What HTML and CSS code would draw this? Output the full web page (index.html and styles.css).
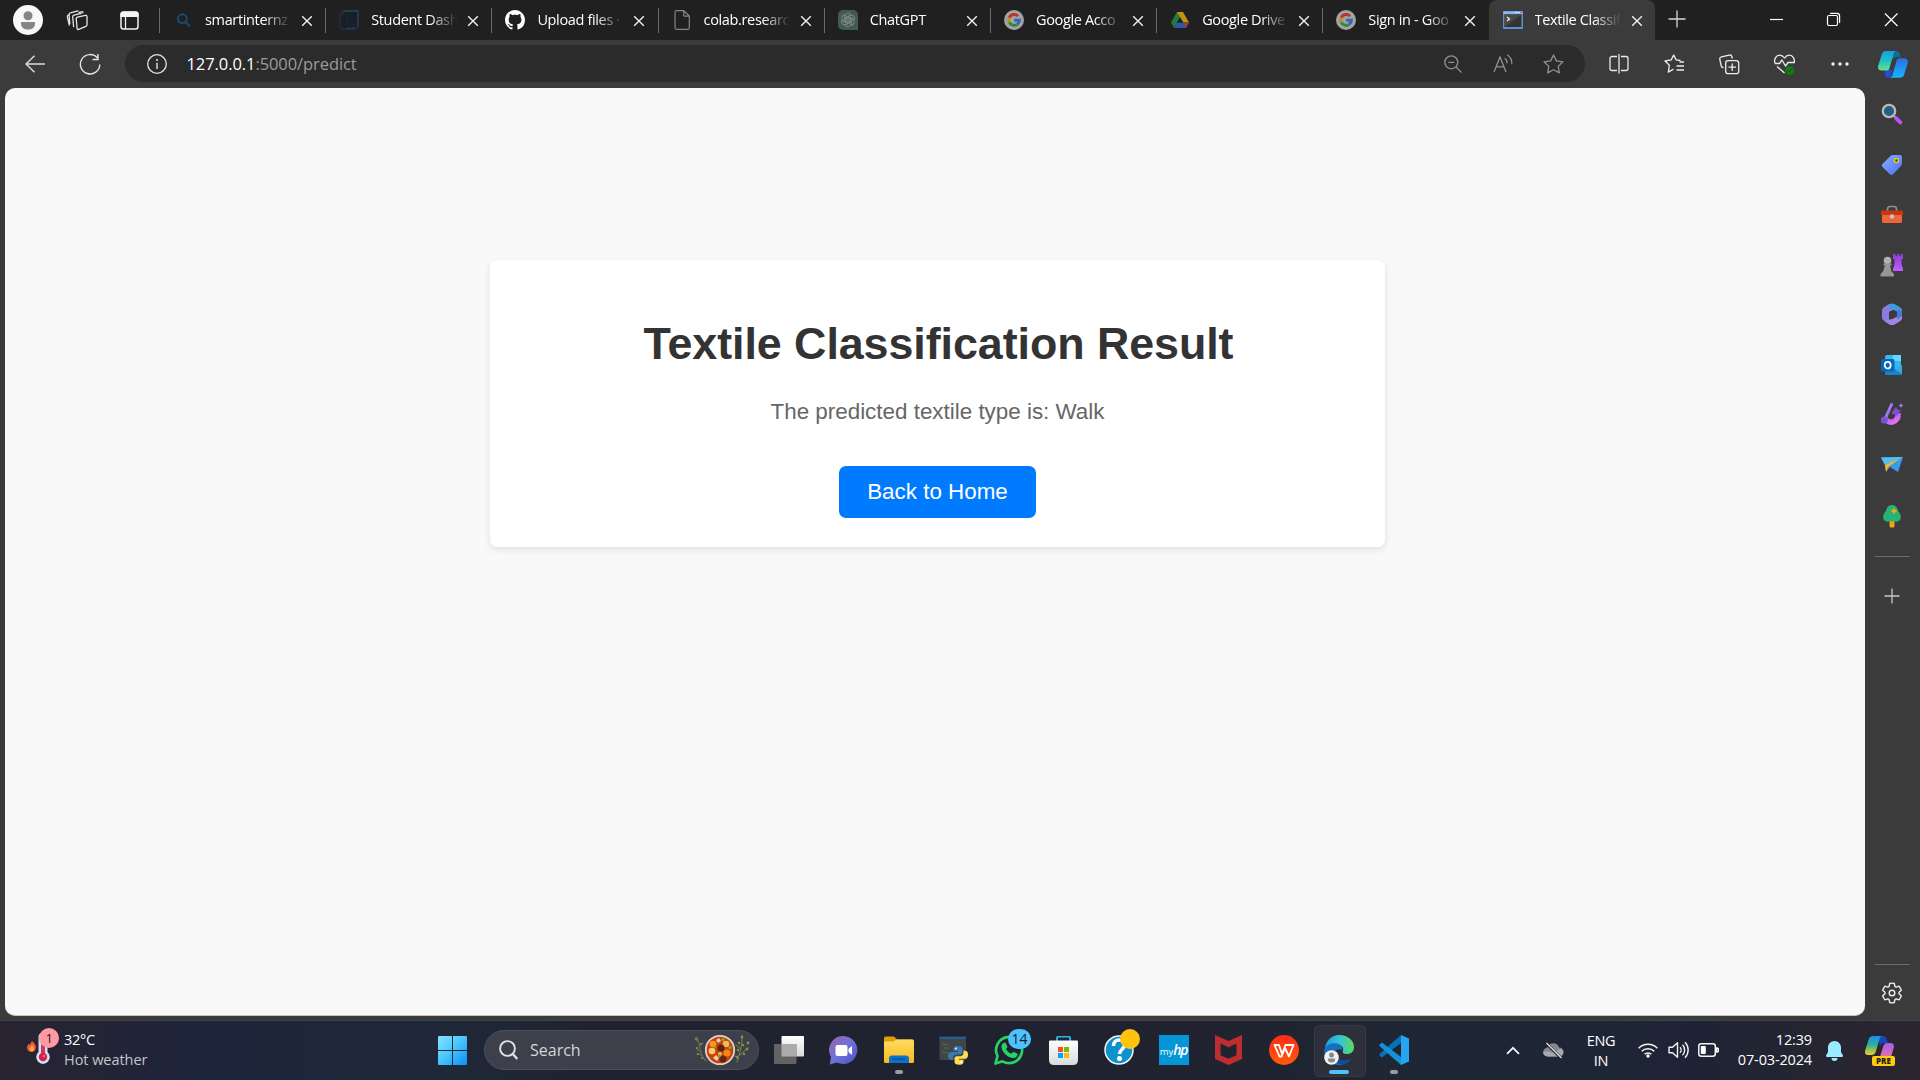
FILE: index.html
```html
<!DOCTYPE html>
<html lang="en">
<head>
<meta charset="utf-8">
<title>Textile Classification Result</title>
<link rel="stylesheet" href="styles.css">
</head>
<body>
<svg class="defs" width="0" height="0" aria-hidden="true">
  <defs>
    <linearGradient id="win" x1="0" y1="0" x2="1" y2="1"><stop offset="0" stop-color="#8be0ff"/><stop offset=".45" stop-color="#4cc9fb"/><stop offset="1" stop-color="#0a8df8"/></linearGradient>
    <linearGradient id="copA" x1="0" y1="0" x2="0" y2="1"><stop offset="0" stop-color="#16a0dc"/><stop offset=".5" stop-color="#1fbfc4"/><stop offset="1" stop-color="#6ee08a"/></linearGradient>
    <linearGradient id="copB" x1="0" y1="0" x2="0" y2="1"><stop offset="0" stop-color="#2d6fe0"/><stop offset="1" stop-color="#16b4ff"/></linearGradient>
    <linearGradient id="copC" x1="0" y1="0" x2="0" y2="1"><stop offset="0" stop-color="#1b8ff0"/><stop offset=".45" stop-color="#2fae9a"/><stop offset="1" stop-color="#f0d020"/></linearGradient>
    <linearGradient id="copD" x1="0" y1="0" x2="0" y2="1"><stop offset="0" stop-color="#a45cf0"/><stop offset="1" stop-color="#ff7a8c"/></linearGradient>
    <linearGradient id="tag" x1="0" y1="0" x2="1" y2="1"><stop offset="0" stop-color="#8ab0ff"/><stop offset="1" stop-color="#4a6ff0"/></linearGradient>
    <linearGradient id="rook" x1="0" y1="0" x2="0" y2="1"><stop offset="0" stop-color="#8a3fd0"/><stop offset="1" stop-color="#c45cff"/></linearGradient>
    <linearGradient id="pink" x1="0" y1="0" x2="1" y2="1"><stop offset="0" stop-color="#8f5cf0"/><stop offset="1" stop-color="#ec70f0"/></linearGradient>
    <linearGradient id="folder" x1="0" y1="0" x2="0" y2="1"><stop offset="0" stop-color="#ffdc62"/><stop offset="1" stop-color="#f9b91c"/></linearGradient>
    <linearGradient id="chat" x1="0" y1="0" x2="1" y2="1"><stop offset="0" stop-color="#9a62a8"/><stop offset=".5" stop-color="#6f73d8"/><stop offset="1" stop-color="#4b50c8"/></linearGradient>
    <linearGradient id="wps" x1="0" y1="0" x2="0" y2="1"><stop offset="0" stop-color="#ff2a1a"/><stop offset="1" stop-color="#ff5a0a"/></linearGradient>
    <linearGradient id="edgeTop" x1="0" y1="0" x2="1" y2="0"><stop offset="0" stop-color="#1b9de0"/><stop offset=".5" stop-color="#34c4d4"/><stop offset="1" stop-color="#5edb58"/></linearGradient>
    <linearGradient id="paper" x1="0" y1="0" x2="0" y2="1"><stop offset="0" stop-color="#ffffff"/><stop offset="1" stop-color="#d8dadd"/></linearGradient>
    <symbol id="x" viewBox="0 0 12 12"><path d="M1.2 1.2l9.6 9.6M10.8 1.2L1.2 10.8" fill="none" stroke="#f0f0f0" stroke-width="1.4"/></symbol>
    <symbol id="google" viewBox="0 0 20 20"><circle cx="10" cy="10" r="10" fill="#a2a2a2"/><g fill="none" stroke-width="2.9"><path d="M5.2 7.6A5.5 5.5 0 0 1 14 6" stroke="#b5362c"/><path d="M5.2 12.4a5.5 5.5 0 0 1 0-4.8" stroke="#bd8e12"/><path d="M13.3 14.3a5.5 5.5 0 0 1-8.1-1.9" stroke="#2e8844"/><path d="M10.2 10.2h5.2a5.4 5.4 0 0 1-2.1 4.1" stroke="#3465b8"/></g></symbol>
  </defs>
</svg>

<header class="tabbar">
  <div class="tool profile"><svg width="30" height="30" viewBox="0 0 30 30"><circle cx="15" cy="15" r="15" fill="#f8f8f8"/><circle cx="15" cy="10.8" r="4.5" fill="#858585"/><path d="M8 17h14v1.5c0 4-3 6-7 6s-7-2-7-6z" fill="#858585"/></svg></div>
  <div class="tool spaces"><svg width="22" height="22" viewBox="0 0 22 22" fill="none" stroke="#e6e6e6" stroke-width="1.3" stroke-linejoin="round" stroke-linecap="round"><path d="M11.5 8.2l7.8-1.9a1.3 1.3 0 0 1 1.7 1.2v8.3c0 .9-.4 1.3-1.2 1.6l-7 3a1.2 1.2 0 0 1-1.7-1l-.9-9.8c0-.8.4-1.2 1.3-1.4z"/><path d="M7.6 17.5l-.9-9.8c0-.8.4-1.4 1.3-1.6l7.2-1.8M3.8 14.5l-.7-9c0-.8.4-1.4 1.3-1.6l7.5-2M3.3 16L1.4 8c-.2-.9 0-1.6.9-2M17 3.6c-.2-.8-.8-1-1.6-.8L13 3.4"/></svg></div>
  <div class="tool tabs-menu"><svg width="19" height="19" viewBox="0 0 19 19"><rect x="1" y="1" width="17" height="17" rx="2.5" fill="none" stroke="#f4f4f4" stroke-width="1.5"/><path d="M.5 3.5a3 3 0 0 1 3-3h12a3 3 0 0 1 3 3V6H.5z" fill="#f4f4f4"/><path d="M5.5 6v12" stroke="#f4f4f4" stroke-width="1.3"/></svg></div>
  <nav class="tabs">
    <div class="tab"><svg class="fav" viewBox="0 0 20 20" fill="none" stroke="#1d4a74" stroke-width="2"><circle cx="9.3" cy="8.7" r="4.4"/><path d="M12.5 12l4.5 4.5"/></svg><span class="label">smartinternz</span><svg class="close"><use href="#x"/></svg></div>
    <div class="tab"><svg class="fav" viewBox="0 0 20 20" fill="none"><path d="M5 1h14v16l-2 2H2l-1-2V5h3z" fill="#1a1e29"/><path d="M4 1h15v15M7 18.500h9" stroke="#1c4f58" stroke-width="1.300"/><path d="M4 1v3H1v12l2 3h13l3-3" stroke="#2b3050" stroke-width="1.200"/><path d="M8 6v8h9" stroke="#1b2942"/></svg><span class="label">Student Dash</span><svg class="close"><use href="#x"/></svg></div>
    <div class="tab"><svg class="fav" viewBox="0 0 16 16"><path fill="#fff" fill-rule="evenodd" d="M8 0C3.58 0 0 3.58 0 8c0 3.54 2.29 6.53 5.47 7.59.4.07.55-.17.55-.38 0-.19-.01-.82-.01-1.49-2.01.37-2.53-.49-2.69-.94-.09-.23-.48-.94-.82-1.13-.28-.15-.68-.52-.01-.53.63-.01 1.08.58 1.23.82.72 1.21 1.87.87 2.33.66.07-.52.28-.87.51-1.07-1.78-.2-3.64-.89-3.64-3.95 0-.87.31-1.59.82-2.15-.08-.2-.36-1.02.08-2.12 0 0 .67-.21 2.2.82.64-.18 1.32-.27 2-.27s1.36.09 2 .27c1.53-1.04 2.2-.82 2.2-.82.44 1.1.16 1.92.08 2.12.51.56.82 1.27.82 2.15 0 3.07-1.87 3.75-3.65 3.95.29.25.54.73.54 1.48 0 1.07-.01 1.93-.01 2.2 0 .21.15.46.55.38A8.01 8.01 0 0 0 16 8c0-4.42-3.58-8-8-8z"/></svg><span class="label">Upload files ·</span><svg class="close"><use href="#x"/></svg></div>
    <div class="tab"><svg class="fav" viewBox="0 0 20 20" fill="none" stroke="#858585" stroke-width="1.2" stroke-linejoin="round"><path d="M4.5.7h7.2L17.3 6v11.8a1.5 1.5 0 0 1-1.5 1.5H4.5A1.5 1.5 0 0 1 3 17.8V2.2A1.5 1.5 0 0 1 4.5.7zM11.7.7v4.500a1 1 0 0 0 1 1h4.600"/></svg><span class="label">colab.researc</span><svg class="close"><use href="#x"/></svg></div>
    <div class="tab"><svg class="fav" viewBox="0 0 20 20"><path d="M5 0h10a5 5 0 0 1 5 5v15H5a5 5 0 0 1-5-5V5a5 5 0 0 1 5-5z" fill="#435953"/><g fill="none" stroke="#7d8885" stroke-width=".9"><g id="petal"><path d="M7.300 11.500V6.200a3.200 3.200 0 0 1 5.700-1.900L8.700 6.900v3.500"/></g><use href="#petal" transform="rotate(60 10 10)"/><use href="#petal" transform="rotate(120 10 10)"/><use href="#petal" transform="rotate(180 10 10)"/><use href="#petal" transform="rotate(240 10 10)"/><use href="#petal" transform="rotate(300 10 10)"/></g></svg><span class="label">ChatGPT</span><svg class="close"><use href="#x"/></svg></div>
    <div class="tab"><svg class="fav"><use href="#google"/></svg><span class="label">Google Acco</span><svg class="close"><use href="#x"/></svg></div>
    <div class="tab"><svg class="fav" viewBox="0 0 20 20"><path d="M7 2h6L4 18l-3-5.500z" fill="#247b3e"/><path d="M7 2h6l6 10.500h-5.800z" fill="#c3920f"/><path d="M4 18l3-5.500h12L16 18z" fill="#2e59a8"/><path d="M14 12.500h5L16 18z" fill="#ae3528"/><path d="M10 7.500l3 5H7z" fill="#202020"/></svg><span class="label">Google Drive</span><svg class="close"><use href="#x"/></svg></div>
    <div class="tab"><svg class="fav"><use href="#google"/></svg><span class="label">Sign in - Goo</span><svg class="close"><use href="#x"/></svg></div>
    <div class="tab active"><svg class="fav" viewBox="0 0 20 20"><rect y="1" width="20" height="18" rx="1" fill="#5c8fd0"/><rect x=".5" y="1.500" width="19" height="2.500" fill="#8fb8ea"/><path d="M12 2.500h2M15 2.500h1.500" stroke="#e4eefb"/><path d="M17 2.500h2" stroke="#e0683c" stroke-width="1.500"/><rect x="1.500" y="4.500" width="17" height="12.500" fill="#333"/><path d="M1.500 17V4.500h17z" fill="#494949"/><path d="M4 7l2.500 2L4 11" fill="none" stroke="#eee" stroke-width="1.300"/></svg><span class="label">Textile Classif</span><svg class="close"><use href="#x"/></svg></div>
  </nav>
  <div class="tool newtab"><svg width="18" height="18" viewBox="0 0 18 18"><path d="M9 .5v17M.5 9h17" stroke="#d8d8d8" stroke-width="1.300"/></svg></div>
  <div class="window-controls">
    <svg width="57" height="38" viewBox="0 0 57 38"><path d="M22 19.500h13" stroke="#fff" stroke-width="1.200"/></svg>
    <svg width="57" height="38" viewBox="0 0 57 38" fill="none" stroke="#fff" stroke-width="1.200"><rect x="22.500" y="15.500" width="10" height="10" rx="1.500"/><path d="M25 13.300h7a2.600 2.600 0 0 1 2.600 2.600v7"/></svg>
    <svg width="57" height="38" viewBox="0 0 57 38"><path d="M23 13.500l12.500 12.500M35.500 13.500L23 26" stroke="#fff" stroke-width="1.200"/></svg>
  </div>
</header>

<div class="toolbar">
  <div class="tool back"><svg width="20" height="18" viewBox="0 0 20 18" fill="none" stroke="#ddd" stroke-width="1.400"><path d="M20 9H1M9.500.7L1 9l8.500 8.300"/></svg></div>
  <div class="tool reload"><svg width="22" height="22" viewBox="0 0 22 22" fill="none" stroke="#e4e4e4" stroke-width="1.400"><path d="M20.800 11.500A9.700 9.700 0 1 1 18.500 5M19 1v5.500h-5.500"/></svg></div>
  <div class="address">
    <svg class="info" width="20" height="20" viewBox="0 0 20 20"><circle cx="10" cy="10" r="9.300" fill="none" stroke="#e4e4e4" stroke-width="1.300"/><path d="M10 8.800V15" stroke="#e4e4e4" stroke-width="1.400"/><circle cx="10" cy="6" r="1" fill="#e4e4e4"/></svg>
    <span class="url"><b>127.0.0.1</b>:5000/predict</span>
    <div class="tool addr-tool"><svg width="18" height="18" viewBox="0 0 18 18" fill="none" stroke="#919191" stroke-width="1.300"><circle cx="7.300" cy="7.300" r="6.500"/><path d="M12 12l5.500 5.500M4.300 7.300h6"/></svg></div>
    <div class="tool addr-tool"><svg width="21" height="20" viewBox="0 0 21 20" fill="none" stroke="#919191" stroke-width="1.300"><path d="M1 18L7 3l6 15M3 12.800h8M11.700 4.200c1.800 1.300 2.500 3 2.300 5M14.200.8c3.500 2.500 5 5.500 4.600 9.500"/></svg></div>
    <div class="tool addr-tool"><svg width="21" height="20" viewBox="0 0 21 20" fill="none" stroke="#919191" stroke-width="1.300" stroke-linejoin="round"><path d="M10.500 1l2.900 5.900 6.500.9-4.700 4.600 1.100 6.500-5.800-3.100-5.800 3.100 1.100-6.500L1.100 7.800l6.500-.9z"/></svg></div>
  </div>
  <div class="tool split"><svg width="20" height="20" viewBox="0 0 20 20" fill="none" stroke="#ececec" stroke-width="1.300"><path d="M8 2.500H3A2 2 0 0 0 1 4.500v10a2 2 0 0 0 2 2h5M12 2.500h5a2 2 0 0 1 2 2v10a2 2 0 0 1-2 2h-5M10 0v19.500"/></svg></div>
  <div class="tool"><svg width="21" height="20" viewBox="0 0 21 20" fill="none" stroke="#ececec" stroke-width="1.300" stroke-linejoin="round"><path d="M15.500 8H20M12.500 12H20M12.500 16H20M16.500 6.500l-4.300-.6L9.700 1 7.200 5.900 1 7l4.400 4.200-1.100 6.900 5.200-3"/></svg></div>
  <div class="tool"><svg width="21" height="21" viewBox="0 0 21 21" fill="none" stroke="#ececec" stroke-width="1.300"><rect x="6.700" y="6.700" width="13" height="13" rx="2.500"/><path d="M13.200 9.500v7.500M9.500 13.200H17M4.500 13.500c-1.400.1-2-.5-2.300-1.500L.8 5.300C.6 4 1.200 3.200 2.400 2.900l7.900-1.800c1.300-.3 2.200.2 2.500 1.400l.5 2"/></svg></div>
  <div class="tool"><svg width="21" height="21" viewBox="0 0 21 21" fill="none" stroke="#ececec" stroke-width="1.300" stroke-linejoin="round"><path d="M.8 9C0 5 2 1.200 5.700 1.200c2 0 3.400.8 4.800 2.800 1.400-2 2.800-2.800 4.800-2.800C19 1.200 21 5 20.200 9M.8 9.500h4.700L8 6l3.500 6 2.500-3.500h6.500M3 12.500l7.500 6.500"/><circle cx="15.800" cy="16.500" r="4.500" fill="#107c10" stroke="none"/><path d="M13.800 16.500l1.500 1.500 2.600-3" stroke="#2b442b" stroke-width="1"/></svg></div>
  <div class="tool"><svg width="18" height="4" viewBox="0 0 18 4" fill="#eee"><circle cx="2" cy="2" r="1.700"/><circle cx="9" cy="2" r="1.700"/><circle cx="16" cy="2" r="1.700"/></svg></div>
  <div class="tool copilot"><svg width="30" height="27" viewBox="0 0 30 27"><path d="M7 19h7l-1 5c-.5 2-1.500 2.500-3 2.500-1.700 0-2.600-1-3-2.500z" fill="#1e50d8"/><path d="M12 0h6.500c2 0 2.500 1 3 2.500l1 3.500h-4c-2 0-3 1-3.500 3z" fill="#0c6f9c"/><path d="M8 0h11c-2 0-3 1-3.500 3l-4 14c-.6 1.800-1.500 2.500-3 2.500H4c-3.300 0-4.500-2-3.700-5L3.700 3.500C4.500 1 5.800 0 8 0z" fill="url(#copA)"/><path d="M22 26.800H11c2 0 3-1 3.500-3l4-14c.6-1.800 1.500-2.500 3-2.500H26c3.300 0 4.500 2 3.700 5l-3.400 11c-.8 2.500-2.100 3.500-4.300 3.500z" fill="url(#copB)"/></svg></div>
</div>

<div class="workspace">
  <main class="page">
    <section class="card">
      <h1>Textile Classification Result</h1>
      <p>The predicted textile type is: Walk</p>
      <a class="button">Back to Home</a>
    </section>
  </main>
  <aside class="sidebar">
    <div class="side"><svg width="22" height="22" viewBox="0 0 22 22"><circle cx="8" cy="8" r="6.200" fill="#235f83" stroke="#b9b9b9" stroke-width="2.300"/><path d="M12.500 12.500l2 2" stroke="#aaa" stroke-width="2"/><path d="M15.300 15.300l4 4" stroke="#c04df5" stroke-width="4" stroke-linecap="round"/></svg></div>
    <div class="side"><svg width="22" height="24" viewBox="0 -2 22 24"><path d="M12 1h7a2 2 0 0 1 2 2v6.500c0 1-.3 1.700-1 2.400l-8 8.300c-1 1-2 1-3 0L1.500 13c-.9-1-.9-2 0-3l8-8c.7-.7 1.500-1 2.500-1z" fill="url(#tag)"/><circle cx="15.500" cy="6.500" r="2" fill="#473d22" stroke="#f0c810" stroke-width="1.500"/></svg></div>
    <div class="side"><svg width="24" height="24" viewBox="0 -3 24 24"><path d="M7.500 6V4a2.500 2.500 0 0 1 2.500-2.500h4A2.500 2.500 0 0 1 16.500 4v2" fill="none" stroke="#919191" stroke-width="1.700"/><path d="M2 9h20v7.500a1.500 1.500 0 0 1-1.500 1.500h-17A1.500 1.500 0 0 1 2 16.500z" fill="#ed653a"/><rect x="1" y="5.500" width="22" height="4.500" rx="1" fill="#c93711"/><circle cx="12" cy="11.500" r="2.300" fill="#c4c4c4"/></svg></div>
    <div class="side"><svg width="24" height="24" viewBox="0 0 24 24"><path d="M13 1h2.500v2H17V1h2.500v2H21V1h2v5h-1.500v5l1.500 5v2H13v-2l1.500-5V6H13z" fill="url(#rook)"/><circle cx="7.500" cy="7.500" r="3.800" fill="#b0b0b0"/><path d="M3.500 10.500h8v2H10l1.500 6 2.500 2.500v2.500H.5V21L3 18.500l2-6H3.500z" fill="#969696"/></svg></div>
    <div class="side"><svg width="22" height="23" viewBox="0 0 22 23"><path d="M8 1l8 4-8 4v8l3 5-8-4.500c-1.300-.7-2-1.600-2-3V7.500C1 6 1.600 5 3 4.200z" fill="#8a7cdc"/><path d="M8 1.300c2-1.200 4-1.200 6 0l5 3c1.300.8 2 1.700 2 3.200V13l-5-3V8.500L8 4.500z" fill="#3f9ae0"/><path d="M21 10v5c0 1.500-.7 2.400-2 3.200l-5 3c-2 1.200-4 1.200-6 0L3 18l8-2 5-3.500V8z" fill="#a184e4"/><path d="M21 8v5l-5 3.500V8.500l2-2z" fill="#4a78d8"/><path d="M8 9l3.500-1.500L16 9.800v3.700L11.500 16 8 14z" fill="#3b3b3b"/></svg></div>
    <div class="side"><svg width="22" height="22" viewBox="0 0 22 22"><path d="M6 1h12a2 2 0 0 1 2 2v17H4V3a2 2 0 0 1 2-2z" fill="#35b8f1"/><path d="M12 1h8v6h-8z" fill="#67d5ff"/><path d="M4 15h17v5a1 1 0 0 1-1 1H5a1 1 0 0 1-1-1z" fill="#1684c8"/><path d="M21 11v9l-7-4.500z" fill="#3ba8e4"/><rect x="0" y="5" width="13.500" height="12.500" rx="1.500" fill="#0867bb"/><ellipse cx="6.700" cy="11.200" rx="3" ry="3.300" fill="none" stroke="#fff" stroke-width="1.700"/></svg></div>
    <div class="side"><svg width="24" height="24" viewBox="0 0 24 24"><path d="M4.500 14a6.800 6.800 0 1 0 13.300-3.500" fill="none" stroke="url(#pink)" stroke-width="5.500"/><path d="M11.500 1.500L5 16" stroke="#a375ee" stroke-width="3" stroke-linecap="round"/><circle cx="4.300" cy="17" r="3.500" fill="#7851d4"/><path d="M16 4l1.500 2.500L21 7.500 18 10l-.500 3-3-1.700-3-.3 1.500-3z" fill="#7a4ee0"/><path d="M21 0l.8 1.700 1.700.8-1.700.8L21 5l-.8-1.700-1.700-.8 1.700-.8z" fill="#aa80fb"/></svg></div>
    <div class="side"><svg width="24" height="18" viewBox="0 0 24 18"><path d="M1 1.500L23 1 18 16l-8-5-4 5-1-7z" fill="#3c9be9"/><path d="M1 1.500L23 1 5 9z" fill="#57bdf0"/><path d="M5 9L21 2 8 11l-2 5z" fill="#f6ba26"/></svg></div>
    <div class="side"><svg width="22" height="24" viewBox="0 0 22 24"><path d="M8.500 16h5v6a1.500 1.500 0 0 1-1.500 1.500h-2A1.500 1.500 0 0 1 8.500 22z" fill="#f6a313"/><path d="M11 1c3.500 0 5.500 2.500 6 6 2.500 3 3.500 5 2.500 8-.8 2-2.300 2.500-4.500 2.500H7c-2.200 0-3.700-.5-4.500-2.500-1-3 0-5 2.500-8 .500-3.500 2.500-6 6-6z" fill="#27b374"/><path d="M13 3.500l1.300 2.300 2.200 1.200-2.200 1.300L13 10.500l-1.300-2.200L9.500 7l2.200-1.200z" fill="#e3ab19"/></svg></div>
    <hr>
    <div class="side add"><svg width="16" height="16" viewBox="0 0 16 16"><path d="M8 .5v15M.5 8h15" stroke="#c8c8c8" stroke-width="1.300"/></svg></div>
    <hr class="bottom-rule">
    <div class="side gear"><svg width="22" height="22" viewBox="0 0 22 22" fill="none" stroke="#ececec" stroke-width="1.400" stroke-linejoin="round"><circle cx="11" cy="11" r="2.800"/><path d="M8.700 1.500Q11 .8 13.300 1.500l.6 3 1.200.7 2.900-1q1.600 1.700 2.300 4L18 10.200v1.600l2.300 2q-.7 2.300-2.300 4l-2.900-1-1.200.7-.6 3q-2.300.7-4.600 0l-.6-3-1.200-.7-2.900 1q-1.600-1.700-2.300-4L4 11.800v-1.600l-2.300-2q.7-2.300 2.300-4l2.900 1 1.200-.7z"/></svg></div>
  </aside>
</div>

<footer class="taskbar">
  <div class="weather">
    <svg width="34" height="38" viewBox="0 0 34 38"><path d="M7 12c2.500 2 4 4 4 6.500A4.500 4.500 0 0 1 6.500 23 4.500 4.500 0 0 1 2 18.500c0-2 1-3 2-4l.7 1.500c.8-1.500 1.300-2.500 2.300-4z" fill="#f05535"/><path d="M7 16c1.500 1.500 2 2.500 2 3.700 0 1.600-1 2.600-2.200 2.600s-2.300-1-2.300-2.300c0-1.500 1.500-2 2.500-4z" fill="#ffab43"/><path d="M13.500 8a4.500 4.500 0 0 1 9 0v15a6.800 6.800 0 1 1-9 0z" fill="#cde0f9"/><path d="M16 8h4v17h-4z" fill="#d93457"/><circle cx="18" cy="28" r="4.200" fill="#d32149"/><circle cx="19" cy="27" r="1" fill="#ff8aa0"/></svg>
    <span class="count">1</span>
    <div class="weather-text"><span>32°C</span><span class="dim">Hot weather</span></div>
  </div>
  <div class="start"><svg width="29" height="29" viewBox="0 0 29 29"><path d="M0 1q0-1 1-1h13v14H0zM15 0h13q1 0 1 1v13H15zM0 15h14v14H1q-1 0-1-1zM15 15h14v13q0 1-1 1H15z" fill="url(#win)"/></svg></div>
  <div class="search">
    <svg width="19" height="20" viewBox="0 0 19 20" fill="none" stroke="#e2e2e2"><circle cx="8.500" cy="8.500" r="7.400" stroke-width="1.900"/><path d="M13.800 14l4.500 5" stroke-width="2.300"/></svg>
    <span>Search</span>
    <svg class="stew" width="58" height="34" viewBox="0 0 58 34"><g fill="none" stroke-linecap="round"><path d="M4 4c3 7 2 18 9 24M4 8L2 5M6 13l4-3M6 18l-3-3M8 22l-4-1" stroke="#66704e" stroke-width="1.200"/><path d="M44 29c2-8 5-14 5-24M47 22l8-7M48 16l-5-4M46 26l-4-3" stroke="#7e8e40" stroke-width="1"/></g><g fill="#7f9643"><circle cx="3" cy="6" r="1"/><circle cx="8" cy="11" r="1"/><circle cx="4" cy="15" r="1"/><circle cx="5" cy="21" r="1"/><circle cx="9" cy="25" r="1"/><circle cx="49" cy="4" r="1.400"/><circle cx="46" cy="10" r="1.200"/><circle cx="50" cy="12" r="1.200"/><circle cx="55" cy="10" r="1.400"/><circle cx="54" cy="16" r="1.400"/><circle cx="45" cy="17" r="1.200"/><circle cx="51" cy="21" r="1.200"/><circle cx="44" cy="24" r="1.200"/></g><circle cx="27" cy="17" r="14.200" fill="#c8410d" stroke="#ddd2cb" stroke-width="1.800"/><circle cx="20" cy="11" r="3.300" fill="#ff951c"/><circle cx="33" cy="11" r="3.300" fill="#f4b64e"/><circle cx="34" cy="20" r="3.500" fill="#fb851b"/><circle cx="19" cy="18" r="3.300" fill="#ffcb68"/><circle cx="28" cy="15" r="3.500" fill="#5c2413"/><circle cx="30" cy="26" r="3.500" fill="#652415"/><path d="M20 25l3-3 3 3-2 3z" fill="#f1cfae"/><path d="M23 7l3-2 2 3-3 2z" fill="#e8d5b8"/><circle cx="27" cy="21" r="2" fill="#f2b545"/><g fill="#7daa24"><circle cx="30" cy="6.500" r="1.700"/><circle cx="37" cy="14.500" r="1.700"/><circle cx="22" cy="14" r="1.400"/><circle cx="26.500" cy="23" r="1.400"/></g></svg>
  </div>
  <div class="apps">
    <div class="app"><svg width="30" height="28" viewBox="0 0 30 28"><rect x="7.500" width="22.500" height="20.500" rx="1" fill="url(#paper)"/><rect y="8" width="22.500" height="20" rx="1" fill="#676767" opacity=".95"/><path d="M7.500 8h15v12.500h-15z" fill="#acacac"/></svg></div>
    <div class="app"><svg width="29" height="29" viewBox="0 0 29 29"><path d="M14.500 0A14 14 0 1 1 8 26.500L.8 28.500 2 21A14 14 0 0 1 14.500 0z" fill="url(#chat)"/><rect x="6.500" y="9" width="12" height="11" rx="2" fill="#fff"/><path d="M19.500 13l3.500-3v9l-3.500-3z" fill="#fff"/></svg></div>
    <div class="app running"><svg width="30" height="28" viewBox="0 0 30 28"><path d="M0 2q0-1.500 1.500-1.500h8.500l3 3h15.500V10H0z" fill="#dda00b"/><path d="M0 5.500h9.500l3-2h16q1.500 0 1.500 1.500v20.500q0 1.500-1.500 1.500h-27q-1.500 0-1.500-1.500z" fill="url(#folder)"/><path d="M5 27v-4.500q0-3 3-3h14q3 0 3 3V27z" fill="#0873c9"/><path d="M8.500 23h13" stroke="#064f98" stroke-width="1.500"/></svg></div>
    <div class="app"><svg width="29" height="29" viewBox="0 0 29 29"><rect x=".5" y="1" width="26.500" height="23" fill="#424548"/><path d="M.5 1.800H27" stroke="#26609b" stroke-width="2.300"/><path d="M3 8.500h6M5 12h5M3 16.500h6" stroke="#466a45" stroke-width="1.300"/><path d="M19 10c-4 0-4.500 1.500-4.500 3.300V15H19v1h-6.500C10 16 9 17.500 9 20s1 4 3.500 4H14v-2.300c0-2 1.500-3.200 3.200-3.200H21c1.600 0 2.500-1 2.500-2.500v-2.700C23.500 11 22 10 19 10z" fill="#3779b1"/><path d="M20 28.800c4 0 4.500-1.500 4.500-3.300v-1.700H20v-1h6c2 0 3-1.500 3-4s-1-4-3-4h-1.500v2.300c0 2-1.500 3.200-3.200 3.200H18c-1.600 0-2.500 1-2.500 2.500v2.700c0 2.300 1.500 3.300 4.500 3.300z" fill="#ffdc51"/><circle cx="16.800" cy="12.500" r="1" fill="#fff"/><circle cx="22.200" cy="26.300" r="1" fill="#fff"/></svg></div>
    <div class="app"><svg width="30" height="30" viewBox="0 0 30 30"><path d="M1.500 28.500l2-7.500a13 13 0 1 1 5 5.300z" fill="none" stroke="#25d366" stroke-width="2.700" stroke-linejoin="round"/><path d="M9.500 8l2-.5 2 4.500-1.500 2c1.500 2.500 3 3.800 5.500 4.800l1.700-2 4.300 2c.2 3-2.300 4.700-5 4.200C13 22 8.500 17.500 7.500 12.500c-.3-2 .5-3.600 2-4.500z" fill="#25d366"/></svg><span class="count blue">14</span></div>
    <div class="app"><svg width="29" height="29" viewBox="0 0 29 29"><path d="M8 6V1.700q0-1 1-1h11q1 0 1 1V6" fill="none" stroke="#28b7ee" stroke-width="1.800"/><path d="M0 5.500q0-1 1-1h27q1 0 1 1V24q0 5-5 5H5q-5 0-5-5z" fill="url(#paper)"/><path d="M9 11h5v5H9z" fill="#f25022"/><path d="M15 11h5v5h-5z" fill="#7fba00"/><path d="M9 17h5v5H9z" fill="#00a4ef"/><path d="M15 17h5v5h-5z" fill="#ffb900"/></svg></div>
    <div class="app"><svg width="30" height="30" viewBox="0 0 30 30"><circle cx="15" cy="15" r="14" fill="#0d91cf" stroke="#f6f6f6" stroke-width="1.500"/><path d="M9.500 11C9.500 7 12 5 15 5s5.500 2 5.500 5c0 4-5 4.500-5 9" fill="none" stroke="#fff" stroke-width="3.500"/><circle cx="15.500" cy="23.500" r="2.500" fill="#fff"/></svg><span class="count yellow"></span></div>
    <div class="app"><div class="myhp"><span>my</span><i>hp</i></div></div>
    <div class="app"><svg width="27" height="30" viewBox="0 0 27 30"><path d="M0 0l13.500 6L27 0v24l-13.500 6L0 24zM5.500 8.500v11.800l8 3.500 8-3.500V8.500l-8 3.700z" fill="#bf2d2f" fill-rule="evenodd"/></svg></div>
    <div class="app"><svg width="30" height="30" viewBox="0 0 30 30"><circle cx="15" cy="15" r="15" fill="url(#wps)"/><path d="M5.500 10h4.500l3 9 3.500-9h8L20 21.500l-4-8.500-3.500 8.500h-2z" fill="none" stroke="#fff" stroke-width="1.800" stroke-linejoin="round"/></svg></div>
    <div class="app current"><svg width="30" height="30" viewBox="0 0 30 30"><path d="M1 17C0 7 7 0 15.500 0 24 0 30 6 30 12c0 4.500-3 7-7 7-3.500 0-5-1.500-4-3.500 1-2.500-1-5.500-5-5.500C8 10 3 12 1 17z" fill="url(#edgeTop)"/><path d="M.3 15C1.500 9.500 8 7.500 13 8.500c4 1 6 4 5 6.500-4-2-7 0-7 4 0 6 8 9 15.500 5C23 29 18 30.300 14 30 5.500 29.500 0 22 .3 15z" fill="#176fc0"/><path d="M11 15.500C7 21 11 29 18 29.700c4 0 7-2.200 9-5.700-7 3.500-15 1-16-8.500z" fill="#124c9c"/><circle cx="7.500" cy="22.500" r="7.300" fill="#f1f1f1"/><circle cx="7.500" cy="20" r="2.500" fill="#888"/><path d="M3.800 23.500h7.400c0 3-1.300 4-3.700 4s-3.700-1-3.700-4z" fill="#888"/></svg></div>
    <div class="app running"><svg width="30" height="30" viewBox="0 0 30 30"><path d="M22 0v8L3 22.500.5 20.500v-1.500z" fill="#0672b9"/><path d="M22 30v-8L3 7.500.5 9.500V11z" fill="#1591db"/><path d="M22 0l8 3.500v23L22 30z" fill="#27a5f0"/></svg></div>
  </div>
  <div class="tray">
    <div class="tool chevron"><svg width="14" height="9" viewBox="0 0 14 9"><path d="M1 7.800l6-6 6 6" fill="none" stroke="#f2f2f2" stroke-width="1.800"/></svg></div>
    <div class="tool cloud"><svg width="21" height="17" viewBox="0 0 21 17"><path d="M5 14.500a4.500 4.500 0 0 1-.5-9A6 6 0 0 1 16 5.500a4.500 4.500 0 0 1 0 9z" fill="#858892"/><path d="M5 14.500c-3 0-5-2-5-4.500 5-2 7 1 10 .5L18 7c3 1 3.500 6-1 7.500z" fill="#a6a9b0"/><path d="M3 1l15 15" stroke="#252a38" stroke-width="3"/><path d="M3.500 1L18.500 16" stroke="#e3e3e3" stroke-width="1.300"/></svg></div>
    <div class="lang"><span>ENG</span><span>IN</span></div>
    <div class="tool net"><svg width="20" height="15" viewBox="0 0 20 15" fill="none" stroke="#f4f4f4" stroke-width="1.500"><path d="M.7 5.200a13 13 0 0 1 18.600 0M3.700 8.300a8.800 8.800 0 0 1 12.600 0M6.600 11.300a4.800 4.800 0 0 1 6.800 0"/><circle cx="10" cy="13" r="1.700" fill="#fff" stroke="none"/></svg></div>
    <div class="tool net"><svg width="21" height="18" viewBox="0 0 21 18" fill="none" stroke="#f4f4f4" stroke-width="1.400" stroke-linejoin="round"><path d="M1 6.200h3.500L9.500 1.700v14.600l-5-4.500H1zM12 6.200a4 4 0 0 1 0 5.600M14.500 3.800a7.300 7.300 0 0 1 0 10.400M17 1.300a11 11 0 0 1 0 15.400"/></svg></div>
    <div class="tool net"><svg width="21" height="14" viewBox="0 0 21 14"><rect x=".8" y=".8" width="16.500" height="12.400" rx="2.500" fill="none" stroke="#f4f4f4" stroke-width="1.500"/><rect x="2.800" y="3" width="5" height="8" rx="1" fill="#fff"/><path d="M18.500 5a2 2 0 0 1 0 4z" fill="none" stroke="#fff" stroke-width="1.500"/></svg></div>
    <div class="clock"><span>12:39</span><span>07-03-2024</span></div>
    <div class="tool bell"><svg width="17" height="20" viewBox="0 0 17 20"><path d="M8.500 0c4 0 6.500 3 6.500 6.500V11l2 3.500q.3 1.500-1.200 1.500H1.200Q-.3 16 0 14.500L2 11V6.500C2 3 4.500 0 8.500 0zM5.500 17h6a3 3 0 0 1-6 0z" fill="#99ebff"/></svg></div>
    <div class="tool pre"><svg width="29" height="29" viewBox="0 0 29 29"><path d="M13 0h5c2 0 3 1 3.500 3l1.500 4h-4c-2 0-3 1-4 3z" fill="#1447c0"/><path d="M8 0h10c-2 0-3 1-3.500 3L11 15c-.7 2.500-2 4-4.500 4H3c-3 0-3.500-2-2.700-5L3.500 4C4.500 1 5.700 0 8 0z" fill="url(#copC)"/><path d="M18 26H10c3-1 4-2 5-5l3-10c1-3 2-4 4-4h3c3.500 0 4.500 2 3.700 5L26 21c-1 4-3 5-8 5z" fill="url(#copD)"/></svg><span class="pre-badge">PRE</span></div>
  </div>
</footer>
</body>
</html>
```
FILE: styles.css
```css
* { box-sizing: border-box; }
body {
  margin: 0;
  width: 1920px;
  height: 1080px;
  overflow: hidden;
  display: flex;
  flex-direction: column;
  background: #3b3b3b;
  color: #fff;
  font-family: "Open Sans", "Noto Sans", sans-serif;
}
svg { display: block; flex: none; }
.defs { position: absolute; }
.tool { display: flex; align-items: center; justify-content: center; width: 55px; height: 38px; flex: none; }

/* Tab strip */
.tabbar { display: flex; height: 40px; background: #202020; flex: none; }
.profile { width: 56px; height: 40px; }
.spaces { width: 43px; height: 40px; padding-right: 1px; }
.tabs-menu { width: 60px; height: 40px; padding-left: 1px; }
.tabs { display: flex; width: 1496px; height: 40px; }
.tab {
  display: flex;
  align-items: center;
  width: 166.2px;
  height: 40px;
  padding-left: 14px;
  flex: none;
  background: linear-gradient(#6a6a6a, #6a6a6a) 0 8px / 1px 25px no-repeat;
}
.tab .fav { width: 20px; height: 20px; }
.tab .label {
  width: 90px;
  margin-left: 12px;
  white-space: nowrap;
  font-size: 14.5px;
  letter-spacing: -0.35px;
  line-height: 20px;
  -webkit-mask-image: linear-gradient(90deg, #000 65%, transparent 96%);
  mask-image: linear-gradient(90deg, #000 65%, transparent 96%);
}
.tab .close { width: 12px; height: 12px; margin: 1px 0 0 6px; }
.tab.active { background: #3b3b3b; border-radius: 8px 8px 0 0; }
.newtab { width: 44px; }
.window-controls { display: flex; margin-left: auto; padding-right: 1px; }

/* Address row */
.toolbar { display: flex; height: 48px; padding: 5px 0 0 7px; flex: none; }
.back { width: 56px; padding-bottom: 1px; }
.reload { width: 54px; }
.address {
  display: flex;
  align-items: center;
  width: 1460px;
  height: 37px;
  margin-left: 8px;
  padding: 0 6px 0 22px;
  border-radius: 19px;
  background: #2b2b2b;
  flex: none;
}
.url { flex: 1; margin-left: 19.5px; color: #9b9b9b; font-size: 16.5px; letter-spacing: -0.08px; }
.url b { color: #fff; font-weight: 400; }
.addr-tool { width: 50.5px; }
.split { width: 56px; margin-left: 6px; }
.copilot { width: 51px; }

/* Content and sidebar */
.workspace { display: flex; height: 932px; padding-left: 5px; flex: none; }
.page {
  width: 1860px;
  height: 928px;
  padding: 172px 0 0 485px;
  border-radius: 10px;
  border-bottom: 1px solid #c4c4c4;
  background: #f9f9f9;
  font-family: "Liberation Sans", Arial, sans-serif;
}
.card {
  width: 895px;
  height: 287px;
  padding: 28px;
  border-radius: 7px;
  background: #fff;
  box-shadow: 0 3px 7px rgba(0, 0, 0, 0.1);
  text-align: center;
}
.card h1 { margin: 30px 0; padding-left: 2px; color: #333; font-size: 44.8px; letter-spacing: -0.06px; line-height: 51px; }
.card p { margin: 0 0 41px; color: #666; font-size: 22.4px; line-height: 26px; }
.button {
  display: inline-block;
  height: 52px;
  padding: 0 28px;
  border-radius: 7px;
  background: #007bff;
  color: #fff;
  font-size: 22.4px;
  line-height: 52px;
}
.sidebar { width: 55px; height: 928px; display: flex; flex-direction: column; align-items: center; padding-top: 1px; }
.side { display: flex; align-items: center; justify-content: center; height: 50.2px; padding-right: 1.5px; flex: none; }
.sidebar hr { width: 35px; height: 1px; margin: 15px 0 0; border: 0; background: #6d6d6d; flex: none; }
.side.add { height: 78px; }
.sidebar .bottom-rule { margin-top: auto; }
.side.gear { height: 56px; margin-bottom: -5px; }

/* Taskbar */
.taskbar {
  display: flex;
  height: 60px;
  border-top: 1px solid #40424b;
  background: linear-gradient(90deg, #292431 0, #1e243a 190px, #1f2838 440px, #1f222f 620px, #20232f 1200px, #1e2635 1450px, #1e2435 1700px, #292530 1870px, #2c2530 100%);
  flex: none;
}
.weather { display: flex; align-items: flex-start; position: relative; width: 438px; padding: 8px 0 0 25px; font-size: 14.5px; letter-spacing: -0.25px; line-height: 20px; }
.weather-text, .lang, .clock { display: flex; flex-direction: column; }
.weather-text { margin: 1px 0 0 5px; }
.dim { color: #c2c4cb; letter-spacing: -0.05px; }
.count {
  position: absolute;
  left: 39px;
  top: 7px;
  width: 20px;
  height: 20px;
  border-radius: 10px;
  background: #ff99a4;
  color: #1c1c1c;
  font-size: 13px;
  line-height: 20px;
  text-align: center;
}
.start { width: 46px; padding-top: 15px; }
.search {
  display: flex;
  align-items: center;
  width: 275px;
  height: 40px;
  margin-top: 9px;
  padding-left: 14px;
  border: 1px solid #4d505a;
  border-radius: 20px;
  background: #3d404b;
  color: #d4d5d8;
  font-size: 16px;
  flex: none;
}
.search span { margin-left: 12px; }
.search .stew { margin-left: auto; margin-right: 7px; }
.apps { display: flex; margin-left: 2.5px; flex: none; }
.app { position: relative; display: flex; align-items: center; justify-content: center; width: 55px; height: 58px; padding-right: 1px; }
.app.running::after, .app.current::after {
  content: "";
  position: absolute;
  bottom: 5px;
  left: 23.5px;
  width: 8px;
  height: 4px;
  border-radius: 2px;
  background: #9a9ba0;
}
.app.current::after { left: 17.5px; width: 20px; background: #4cc2ff; }
.app.current::before {
  content: "";
  position: absolute;
  left: 2px;
  top: 4px;
  width: 50px;
  height: 50px;
  border: 1px solid #373a44;
  border-radius: 5px;
  background: #2d303a;
}
.app svg { position: relative; }
.count.blue { left: 26.5px; top: 8px; width: 23px; background: #4cc2ff; font-size: 14px; }
.count.yellow { left: 28px; top: 8px; background: #ffc20e; }
.myhp {
  display: flex;
  align-items: baseline;
  justify-content: center;
  width: 30px;
  height: 30px;
  background: #0496d6;
  font-size: 9.5px;
  line-height: 29px;
}
.myhp i { font-size: 14px; font-weight: 600; letter-spacing: -1.2px; }
.tray { display: flex; margin-left: auto; padding-right: 4px; align-items: flex-start; font-size: 14.5px; letter-spacing: -0.3px; line-height: 20px; }
.tray .tool { height: 58px; }
.tray .chevron { width: 40px; }
.tray .cloud { width: 40px; }
.lang { width: 56px; margin-right: 4px; padding-top: 10px; align-items: center; }
.tray .net { width: 30px; }
.clock { width: 93px; padding-top: 9px; align-items: flex-end; padding-right: 4px; letter-spacing: -0.15px; }
.tray .bell { width: 38px; padding-top: 1px; padding-right: 1px; }
.tray .pre { position: relative; width: 62px; padding-right: 11px; }
.pre-badge {
  position: absolute;
  left: 18px;
  top: 35px;
  width: 23px;
  height: 10px;
  border-radius: 2px;
  background: #ffcc0d;
  color: #222;
  font-size: 8px;
  font-weight: 800;
  letter-spacing: 0;
  line-height: 10px;
  text-align: center;
}
```
